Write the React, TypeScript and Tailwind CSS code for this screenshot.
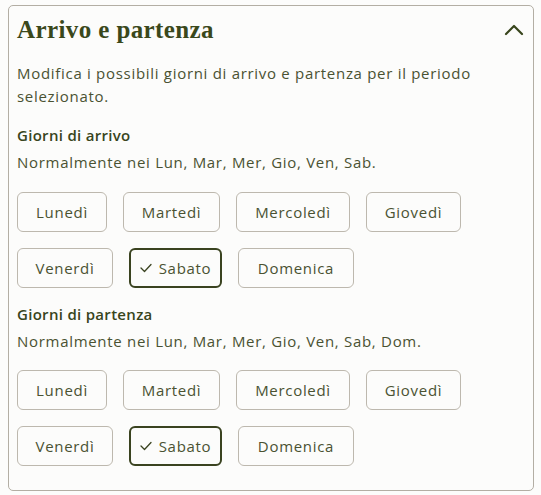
import React from "react";

const days = [
  { label: "Lunedì", w: "w-[90px]" },
  { label: "Martedì", w: "w-[97px]" },
  { label: "Mercoledì", w: "w-[114px]" },
  { label: "Giovedì", w: "w-[95px]" },
  { label: "Venerdì", w: "w-[96px]" },
  { label: "Sabato", w: "w-[93px]", selected: true },
  { label: "Domenica", w: "w-[116px]" },
];

function Check() {
  return (
    <svg width="12" height="10" viewBox="0 0 12 10" fill="none" className="mr-[7px]">
      <path d="M1 5 L4.5 8.5 L11 1.5" stroke="#3a4320" strokeWidth="1.3" strokeLinecap="round" strokeLinejoin="round" />
    </svg>
  );
}

function DayButtons() {
  return (
    <div className="flex flex-wrap gap-4 w-[460px]">
      {days.map((d) =>
        d.selected ? (
          <button
            key={d.label}
            className={`${d.w} h-10 flex items-center justify-center rounded-[6px] border-2 border-[#3a4320] bg-[#fcfcfb] text-[15px] tracking-[0.7px] text-[#4a5232]`}
          >
            <Check />
            {d.label}
          </button>
        ) : (
          <button
            key={d.label}
            className={`${d.w} h-10 flex items-center justify-center rounded-[6px] border border-[#bdb8ae] bg-[#fcfcfb] text-[15px] tracking-[0.7px] text-[#4a5232]`}
          >
            {d.label}
          </button>
        )
      )}
    </div>
  );
}

export default function App() {
  return (
    <div className="w-[541px] h-[495px] bg-[#fcfcfb] pt-[5px] pl-2" style={{ fontFamily: '"Open Sans", sans-serif' }}>
      <div className="w-[526px] h-[486px] border border-[#b3aea4] rounded-[5px] bg-[#fcfcfb] px-2">
        <div className="h-12 flex items-center justify-between">
          <h2
            className="text-[25px] leading-8 font-bold tracking-[0.4px] text-[#3a481b]"
            style={{ fontFamily: '"Liberation Serif", serif' }}
          >
            Arrivo e partenza
          </h2>
          <svg width="20" height="12" viewBox="0 0 20 12" fill="none" className="mr-[1px]">
            <path d="M2 10 L10 2 L18 10" stroke="#38451c" strokeWidth="2.2" strokeLinecap="round" strokeLinejoin="round" />
          </svg>
        </div>
        <p className="mt-2 w-[475px] text-[15px] leading-[23px] tracking-[0.7px] text-[#4a5232]">
          Modifica i possibili giorni di arrivo e partenza per il periodo selezionato.
        </p>
        <div className="mt-4 flex flex-col">
          <p className="text-[15px] leading-[23px] font-semibold tracking-[0.3px] text-[#38451c]">Giorni di arrivo</p>
          <p className="mt-1 text-[15px] leading-[23px] tracking-[0.7px] text-[#4a5232]">
            Normalmente nei Lun, Mar, Mer, Gio, Ven, Sab.
          </p>
          <div className="mt-[18px]">
            <DayButtons />
          </div>
        </div>
        <div className="mt-[15px] flex flex-col">
          <p className="text-[15px] leading-[23px] font-semibold tracking-[0.3px] text-[#38451c]">Giorni di partenza</p>
          <p className="mt-1 text-[15px] leading-[23px] tracking-[0.7px] text-[#4a5232]">
            Normalmente nei Lun, Mar, Mer, Gio, Ven, Sab, Dom.
          </p>
          <div className="mt-[17px]">
            <DayButtons />
          </div>
        </div>
      </div>
    </div>
  );
}
